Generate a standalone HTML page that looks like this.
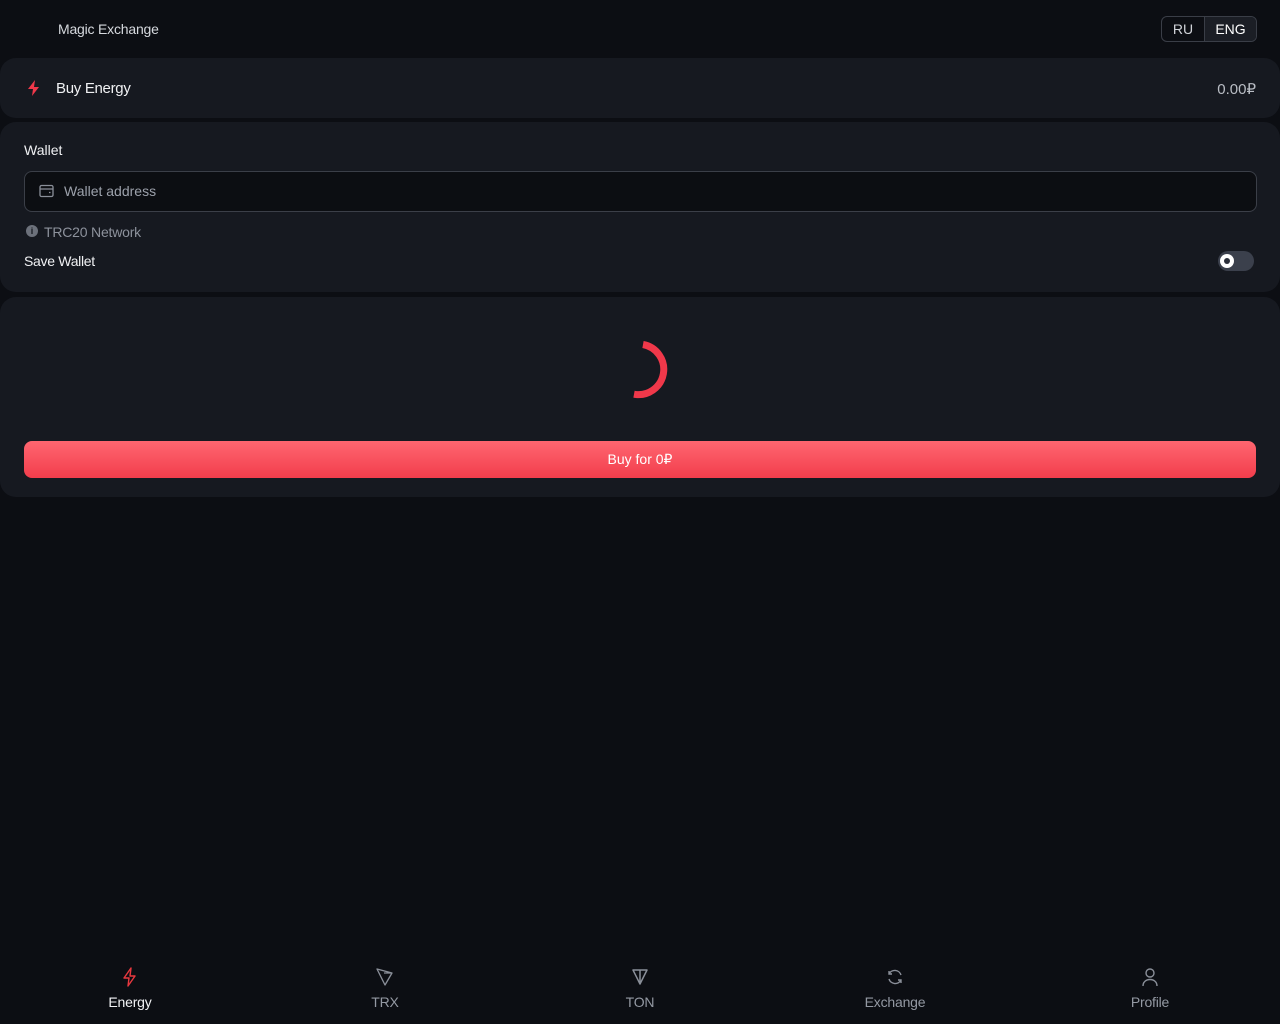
<!DOCTYPE html>
<html><head><meta charset="utf-8"><style>
*{box-sizing:border-box;margin:0;padding:0}
body{width:1280px;height:1024px;background:#0c0e13;font-family:"Liberation Sans",sans-serif;color:#e8eaee;position:relative;overflow:hidden;font-size:14px}
.abs{position:absolute}
.card{position:absolute;left:0;width:1280px;background:#161920;border-radius:16px}
.lang{position:absolute;left:1161px;top:16px;width:96px;height:26px;border:1px solid #3a3e47;border-radius:6px;display:flex;font-size:14px}
.lang div{display:flex;align-items:center;justify-content:center;height:100%}
.nav{position:absolute;top:967px;width:120px;text-align:center;font-size:14px;color:#9499a3;letter-spacing:-0.2px}
.nav svg{display:block;margin:0 auto 7px}
</style></head><body>
<div class="abs" style="left:58px;top:21px;font-size:14px;color:#d6d9de;letter-spacing:-0.2px">Magic Exchange</div>
<div class="lang"><div style="width:43px;border-right:1px solid #3a3e47;color:#d0d3d8">RU</div><div style="flex:1;background:#1b1e25;color:#fff;border-radius:0 5px 5px 0">ENG</div></div>

<div class="card" style="top:58px;height:60px">
<svg class="abs" style="left:27px;top:22px" width="14" height="16" viewBox="0 0 14 16"><path d="M8 0L1 9h5l-1 7 7-9H7z" fill="#f0384a"/></svg>
<div class="abs" style="left:56px;top:22px;font-size:15px;color:#f0f1f3;letter-spacing:-0.3px">Buy Energy</div>
<div class="abs" style="right:24px;top:22px;font-size:15px;color:#b9bdc4">0.00₽</div>
</div>

<div class="card" style="top:122px;height:170px">
<div class="abs" style="left:24px;top:20px;font-size:14px;color:#f0f1f3">Wallet</div>
<div class="abs" style="left:24px;top:49px;width:1233px;height:41px;background:#0c0e12;border:1px solid #3b3f48;border-radius:8px">
<svg class="abs" style="left:14px;top:12px" width="16" height="14" viewBox="0 0 16 14"><rect x="1" y="1.5" width="13" height="11" rx="1.5" fill="none" stroke="#8a8f99" stroke-width="1.3"/><path d="M1 5h13M10 8.5h1.5" stroke="#8a8f99" stroke-width="1.3"/></svg>
<div class="abs" style="left:39px;top:11px;color:#9ca1ab;font-size:14px">Wallet address</div></div>
<div class="abs" style="left:26px;top:103px;width:12px;height:12px;border-radius:50%;background:#6c717b;color:#161920;font-size:9px;font-weight:bold;text-align:center;line-height:12px">i</div>
<div class="abs" style="left:44px;top:102px;color:#8d929c;font-size:14px;letter-spacing:-0.2px">TRC20 Network</div>
<div class="abs" style="left:24px;top:131px;color:#f0f1f3;font-size:14px;letter-spacing:-0.3px">Save Wallet</div>
<div class="abs" style="left:1218px;top:129px;width:36px;height:20px;border-radius:10px;background:#3b404c"><div class="abs" style="left:2px;top:3px;width:14px;height:14px;border-radius:50%;background:#fff"><div class="abs" style="left:4px;top:4px;width:6px;height:6px;border-radius:50%;background:#2b2f3a"></div></div></div>
</div>

<div class="card" style="top:297px;height:200px">
<svg class="abs" style="left:610px;top:43px" width="60" height="60" viewBox="0 0 60 60"><path d="M33 4.5 A25 25 0 0 1 24 54.2" fill="none" stroke="#f0384a" stroke-width="7"/></svg>
<div class="abs" style="left:24px;top:144px;width:1232px;height:37px;border-radius:8px;background:linear-gradient(#ff6670,#f23d4c);color:#fff;text-align:center;line-height:37px;font-size:14px">Buy for 0₽</div>
</div>

<div class="nav" style="left:70px;color:#f2f3f5"><svg width="18" height="20" viewBox="0 0 18 20"><path d="M10 1L3 11h5l-1 8 7-10H9z" fill="none" stroke="#e8383f" stroke-width="1.4" stroke-linejoin="round"/></svg>Energy</div>
<div class="nav" style="left:325px"><svg width="20" height="20" viewBox="0 0 20 20"><path d="M2 2l15 4-7 12zM2 2l8 16M17 6l-8 0" fill="none" stroke="#8a8f99" stroke-width="1.3" stroke-linejoin="round"/></svg>TRX</div>
<div class="nav" style="left:580px"><svg width="20" height="20" viewBox="0 0 20 20"><path d="M3 3h14l-7 14zM10 3v14" fill="none" stroke="#8a8f99" stroke-width="1.5" stroke-linejoin="round"/></svg>TON</div>
<div class="nav" style="left:835px"><svg width="20" height="20" viewBox="0 0 20 20"><path d="M16 8a6.5 6.5 0 0 0-12-1M4 12a6.5 6.5 0 0 0 12 1M4 4v3h3M16 16v-3h-3" fill="none" stroke="#8a8f99" stroke-width="1.4"/></svg>Exchange</div>
<div class="nav" style="left:1090px"><svg width="20" height="20" viewBox="0 0 20 20"><circle cx="10" cy="6" r="4" fill="none" stroke="#8a8f99" stroke-width="1.4"/><path d="M3 19c0-4 3-6.5 7-6.5s7 2.5 7 6.5" fill="none" stroke="#8a8f99" stroke-width="1.4"/></svg>Profile</div>
</body></html>
